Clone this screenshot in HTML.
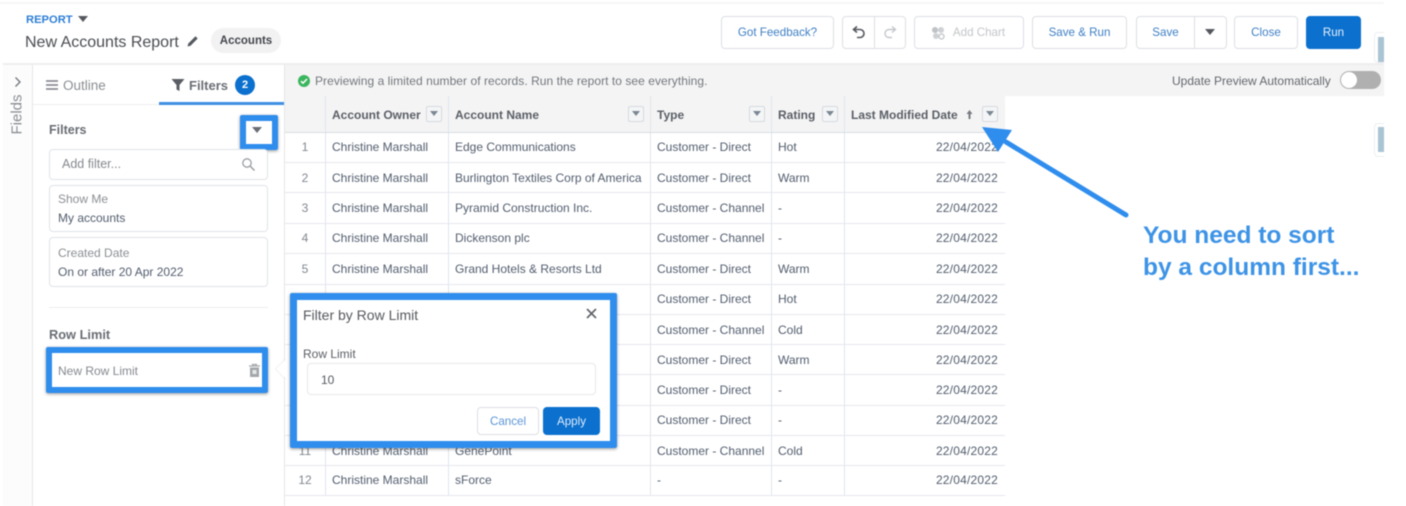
<!DOCTYPE html>
<html>
<head>
<meta charset="utf-8">
<style>
html,body{margin:0;padding:0;background:#fff}
body{width:1406px;height:506px;overflow:hidden;position:relative;font-family:"Liberation Sans",sans-serif;color:#4c5563;font-size:12px}
#w{position:absolute;left:0;top:0;width:1406px;height:506px;filter:blur(.6px);overflow:hidden}
.a{position:absolute;white-space:nowrap}
.b{position:absolute;box-sizing:border-box;background:#fff;border:1px solid #dfe3e8;border-radius:4px}
.btn{position:absolute;box-sizing:border-box;background:#fff;border:1px solid #dcdfe4;border-radius:4px;height:33px;top:16px;text-align:center;line-height:31px;color:#3f7fc4;font-size:11.6px}
.hl{position:absolute;box-sizing:border-box;border:6px solid #2f8ded;border-radius:2px;box-shadow:0 1px 3px rgba(0,0,0,.4)}
.hr{position:absolute;left:285px;width:720px;height:1px;background:#e4e8ee}
.vr{position:absolute;top:96px;height:400px;width:1px;background:#dfe4ec}
.th{position:absolute;top:108px;font-weight:bold;color:#5a5f66;font-size:12px;white-space:nowrap}
.dd{position:absolute;top:106px;width:16px;height:16px;box-sizing:border-box;border:1px solid #d5dae0;border-radius:2px;background:#f4f5f6}
.dd:after{content:"";position:absolute;left:3px;top:4px;border:4px solid transparent;border-top:5px solid #7b8794;border-bottom:0}
.n{position:absolute;width:40px;left:285px;text-align:center;color:#80868e}
.c1,.c2,.c3,.c4,.c5{position:absolute;white-space:nowrap;color:#525d6e}
.c1{left:332px}.c2{left:455px}.c3{left:657px}.c4{left:778px}.c5{right:408px;letter-spacing:.2px}
</style>
</head>
<body>
<div id="w">
<div class="a" style="left:0;top:2px;width:1384px;height:2px;background:#f6f6f6"></div>

<!-- Header -->
<div class="a" style="left:26px;top:14px;color:#2e7fd6;font-weight:bold;font-size:11.2px">REPORT</div>
<div class="a" style="left:78px;top:16px;width:0;height:0;border:5px solid transparent;border-top:6px solid #55595f;border-bottom:0"></div>
<div class="a" style="left:25px;top:34px;font-size:16px;color:#4a4d52">New Accounts Report</div>
<svg class="a" style="left:186px;top:34px" width="14" height="14" viewBox="0 0 14 14"><path d="M1.500 12.500l.8-3L9.500 2.300l2.200 2.200-7.200 7.200z" fill="#55595f"/></svg>
<div class="a" style="left:211px;top:28px;width:70px;height:25px;border-radius:13px;background:#f2f2f2;text-align:center;line-height:27px;font-weight:bold;font-size:11.500px;color:#43474d">Accounts</div>

<div class="btn" style="left:721px;width:113px">Got Feedback?</div>
<div class="btn" style="left:842px;width:64px"></div>
<div class="a" style="left:874px;top:17px;width:1px;height:31px;background:#dcdfe4"></div>
<svg class="a" style="left:851px;top:24px" width="16" height="17" viewBox="0 0 16 17"><path d="M6 2.500L2.500 5.500 6 8.500M3 5.500h6a3.700 3.700 0 0 1 0 8H6" fill="none" stroke="#54585e" stroke-width="1.600"/></svg>
<svg class="a" style="left:882px;top:24px" width="16" height="17" viewBox="0 0 16 17"><path d="M10 2.500l3.500 3-3.500 3M13 5.500H7a3.700 3.700 0 0 0 0 8h3" fill="none" stroke="#c4c7cb" stroke-width="1.400"/></svg>
<div class="btn" style="left:914px;width:110px;color:#c3c5c8;padding-left:20px">Add Chart</div>
<svg class="a" style="left:930px;top:25px" width="16" height="16" viewBox="0 0 16 16"><circle cx="5" cy="5" r="3" fill="#bfc2c6"/><circle cx="11" cy="5" r="3" fill="#cfd2d5"/><circle cx="6" cy="11" r="3" fill="#cfd2d5"/><circle cx="11.500" cy="11.500" r="2.500" fill="none" stroke="#bfc2c6" stroke-width="1.200"/></svg>
<div class="btn" style="left:1032px;width:95px">Save &amp; Run</div>
<div class="btn" style="left:1136px;width:59px;border-radius:4px 0 0 4px">Save</div>
<div class="btn" style="left:1194px;width:33px;border-radius:0 4px 4px 0"></div>
<div class="a" style="left:1205px;top:29px;width:0;height:0;border:5px solid transparent;border-top:6px solid #54585e;border-bottom:0"></div>
<div class="btn" style="left:1234px;width:64px">Close</div>
<div class="btn" style="left:1306px;width:55px;background:#0b70ce;border-color:#0b70ce;color:#e7f1fb">Run</div>

<!-- Right edge thumbnails -->
<div class="b" style="left:1374px;top:32px;width:16px;height:31px;border-color:#eceef0"></div>
<div class="a" style="left:1378px;top:37px;width:6px;height:25px;background:#a9c4d2"></div>
<div class="b" style="left:1374px;top:123px;width:16px;height:34px;border-color:#eceef0"></div>
<div class="a" style="left:1378px;top:127px;width:6px;height:25px;background:#a9c4d2"></div>
<div class="a" style="left:1384px;top:0;width:22px;height:506px;background:#fff"></div>

<!-- Body frame -->
<div class="a" style="left:3px;top:63px;width:1381px;height:2px;background:#eeeeee"></div>
<div class="a" style="left:32px;top:65px;width:1px;height:441px;background:#e6e6e6"></div>
<div class="a" style="left:284px;top:65px;width:1px;height:441px;background:#e6e6e6"></div>
<div class="a" style="left:3px;top:65px;width:29px;height:441px;background:#fcfcfc"></div>

<!-- Fields rail -->
<svg class="a" style="left:13px;top:76px" width="10" height="12" viewBox="0 0 10 12"><path d="M2.500 1.500L7 6l-4.500 4.500" fill="none" stroke="#70757b" stroke-width="1.300"/></svg>
<div class="a" style="left:-3px;top:106px;width:40px;text-align:center;transform:rotate(-90deg);font-size:15px;color:#8b8f94">Fields</div>

<!-- Tabs -->
<svg class="a" style="left:45px;top:79px" width="14" height="12" viewBox="0 0 14 12"><path d="M1 2h12M1 6h12M1 10h12" stroke="#7b7f85" stroke-width="1.500"/></svg>
<div class="a" style="left:63px;top:78px;font-size:13.500px;color:#8a8e93">Outline</div>
<svg class="a" style="left:171px;top:78px" width="14" height="14" viewBox="0 0 14 14"><path d="M.5 1h13L8.500 7v6l-3-1.500V7z" fill="#5a5e64"/></svg>
<div class="a" style="left:189px;top:78px;font-size:13px;font-weight:bold;color:#6a6e74">Filters</div>
<div class="a" style="left:235px;top:75px;width:20px;height:20px;border-radius:50%;background:#0b70ce;color:#fff;text-align:center;line-height:20px;font-size:11px;font-weight:bold">2</div>
<div class="a" style="left:33px;top:104px;width:251px;height:1px;background:#eeeeee"></div>
<div class="a" style="left:159px;top:102px;width:125px;height:3px;background:#3f8fe3"></div>

<!-- Filters panel -->
<div class="a" style="left:49px;top:123px;font-weight:bold;font-size:12.500px;color:#696d73">Filters</div>
<div class="a" style="left:245px;top:120px;width:28px;height:25px;background:#fff"></div>
<div class="a" style="left:252px;top:127px;width:0;height:0;border:5px solid transparent;border-top:6px solid #6a6e74;border-bottom:0"></div>
<div class="hl" style="left:240px;top:115px;width:38px;height:35px"></div>

<div class="b" style="left:49px;top:149px;width:219px;height:31px"></div>
<div class="a" style="left:62px;top:157px;font-size:12.500px;color:#85898f">Add filter...</div>
<svg class="a" style="left:241px;top:157px" width="15" height="15" viewBox="0 0 15 15"><circle cx="6" cy="6" r="4.200" fill="none" stroke="#9a9ea3" stroke-width="1.300"/><path d="M9 9l4.500 4.500" stroke="#9a9ea3" stroke-width="1.500"/></svg>

<div class="b" style="left:49px;top:185px;width:219px;height:47px"></div>
<div class="a" style="left:58px;top:192px;color:#8b8f94">Show Me</div>
<div class="a" style="left:58px;top:211px;color:#525d6e">My accounts</div>
<div class="b" style="left:49px;top:237px;width:219px;height:50px"></div>
<div class="a" style="left:58px;top:246px;color:#8b8f94">Created Date</div>
<div class="a" style="left:58px;top:265px;color:#525d6e">On or after 20 Apr 2022</div>
<div class="a" style="left:49px;top:307px;width:219px;height:1px;background:#ececec"></div>

<div class="a" style="left:49px;top:327px;font-weight:bold;font-size:12.800px;color:#696d73">Row Limit</div>
<div class="hl" style="left:46px;top:347px;width:222px;height:46px"></div>
<div class="a" style="left:58px;top:364px;color:#85898f">New Row Limit</div>
<svg class="a" style="left:248px;top:363px" width="13" height="15" viewBox="0 0 13 15"><path d="M1 3h11M4.500 3V1.500h4V3" stroke="#a4a7aa" stroke-width="1.200" fill="none"/><path d="M2 4.500h9V14H2z" fill="#a4a7aa"/><path d="M4.500 7h4v4h-4z" fill="#e6e6e6"/></svg>

<!-- Preview bar -->
<div class="a" style="left:285px;top:65px;width:1099px;height:31px;background:#f4f4f4"></div>
<div class="a" style="left:298px;top:75px;width:12px;height:12px;border-radius:50%;background:#3bb55e"></div>
<svg class="a" style="left:298px;top:75px" width="12" height="12" viewBox="0 0 12 12"><path d="M3 6.200l2 2 4-4.200" fill="none" stroke="#fff" stroke-width="1.500"/></svg>
<div class="a" style="left:315px;top:74px;color:#73777d;letter-spacing:.05px">Previewing a limited number of records. Run the report to see everything.</div>
<div class="a" style="left:1172px;top:74px;color:#63676d">Update Preview Automatically</div>
<div class="a" style="left:1340px;top:71px;width:41px;height:18px;border-radius:9px;background:#b0b0b0"></div>
<div class="a" style="left:1341px;top:72px;width:16px;height:16px;border-radius:50%;background:#fff"></div>

<!-- Table header -->
<div class="a" style="left:285px;top:96px;width:720px;height:36px;background:#f4f4f4"></div>
<div class="th" style="left:332px">Account Owner</div><div class="dd" style="left:426px"></div>
<div class="th" style="left:455px">Account Name</div><div class="dd" style="left:628px"></div>
<div class="th" style="left:657px">Type</div><div class="dd" style="left:749px"></div>
<div class="th" style="left:778px">Rating</div><div class="dd" style="left:822px"></div>
<div class="th" style="left:851px">Last Modified Date</div>
<svg class="a" style="left:965px;top:109px" width="9" height="12" viewBox="0 0 9 12"><path d="M4.500 1L1.500 5h2v5h2V5h2z" fill="#777b81"/></svg>
<div class="dd" style="left:982px"></div>

<!-- Grid -->
<div class="vr" style="left:325px"></div>
<div class="vr" style="left:448px"></div>
<div class="vr" style="left:650px"></div>
<div class="vr" style="left:771px"></div>
<div class="vr" style="left:844px"></div>
<div class="hr" style="top:132px;background:#d8dde4"></div>
<div class="hr" style="top:162px"></div>
<div class="hr" style="top:192px"></div>
<div class="hr" style="top:223px"></div>
<div class="hr" style="top:253px"></div>
<div class="hr" style="top:284px"></div>
<div class="hr" style="top:314px"></div>
<div class="hr" style="top:344px"></div>
<div class="hr" style="top:374px"></div>
<div class="hr" style="top:405px"></div>
<div class="hr" style="top:435px"></div>
<div class="hr" style="top:465px"></div>
<div class="hr" style="top:495px"></div>

<!-- Rows -->
<div class="n" style="top:140px">1</div><div class="c1" style="top:140px">Christine Marshall</div><div class="c2" style="top:140px">Edge Communications</div><div class="c3" style="top:140px">Customer - Direct</div><div class="c4" style="top:140px">Hot</div><div class="c5" style="top:140px">22/04/2022</div>
<div class="n" style="top:171px">2</div><div class="c1" style="top:171px">Christine Marshall</div><div class="c2" style="top:171px">Burlington Textiles Corp of America</div><div class="c3" style="top:171px">Customer - Direct</div><div class="c4" style="top:171px">Warm</div><div class="c5" style="top:171px">22/04/2022</div>
<div class="n" style="top:201px">3</div><div class="c1" style="top:201px">Christine Marshall</div><div class="c2" style="top:201px">Pyramid Construction Inc.</div><div class="c3" style="top:201px">Customer - Channel</div><div class="c4" style="top:201px">-</div><div class="c5" style="top:201px">22/04/2022</div>
<div class="n" style="top:231px">4</div><div class="c1" style="top:231px">Christine Marshall</div><div class="c2" style="top:231px">Dickenson plc</div><div class="c3" style="top:231px">Customer - Channel</div><div class="c4" style="top:231px">-</div><div class="c5" style="top:231px">22/04/2022</div>
<div class="n" style="top:262px">5</div><div class="c1" style="top:262px">Christine Marshall</div><div class="c2" style="top:262px">Grand Hotels &amp; Resorts Ltd</div><div class="c3" style="top:262px">Customer - Direct</div><div class="c4" style="top:262px">Warm</div><div class="c5" style="top:262px">22/04/2022</div>
<div class="c3" style="top:292px">Customer - Direct</div><div class="c4" style="top:292px">Hot</div><div class="c5" style="top:292px">22/04/2022</div>
<div class="c3" style="top:323px">Customer - Channel</div><div class="c4" style="top:323px">Cold</div><div class="c5" style="top:323px">22/04/2022</div>
<div class="c3" style="top:353px">Customer - Direct</div><div class="c4" style="top:353px">Warm</div><div class="c5" style="top:353px">22/04/2022</div>
<div class="c3" style="top:383px">Customer - Direct</div><div class="c4" style="top:383px">-</div><div class="c5" style="top:383px">22/04/2022</div>
<div class="c3" style="top:413px">Customer - Direct</div><div class="c4" style="top:413px">-</div><div class="c5" style="top:413px">22/04/2022</div>
<div class="n" style="top:444px">11</div><div class="c1" style="top:444px">Christine Marshall</div><div class="c2" style="top:444px">GenePoint</div><div class="c3" style="top:444px">Customer - Channel</div><div class="c4" style="top:444px">Cold</div><div class="c5" style="top:444px">22/04/2022</div>
<div class="n" style="top:473px">12</div><div class="c1" style="top:473px">Christine Marshall</div><div class="c2" style="top:473px">sForce</div><div class="c3" style="top:473px">-</div><div class="c4" style="top:473px">-</div><div class="c5" style="top:473px">22/04/2022</div>

<!-- Popover -->
<div class="a" style="left:279px;top:362px;width:14px;height:14px;background:#fff;transform:rotate(45deg);box-shadow:-1px 1px 1px rgba(0,0,0,.06)"></div>
<div class="a" style="left:290px;top:293px;width:327px;height:155px;background:#fff"></div>
<div class="hl" style="left:290px;top:293px;width:327px;height:155px;border-width:7px"></div>
<div class="a" style="left:303px;top:307px;font-size:14px;color:#56595e">Filter by Row Limit</div>
<svg class="a" style="left:585px;top:307px" width="13" height="13" viewBox="0 0 13 13"><path d="M2 2l9 9M11 2l-9 9" stroke="#5f6368" stroke-width="1.600"/></svg>
<div class="a" style="left:303px;top:347px;color:#5c6066">Row Limit</div>
<div class="b" style="left:307px;top:363px;width:289px;height:32px;border-color:#e6e8eb"></div>
<div class="a" style="left:321px;top:373px;color:#55595f">10</div>
<div class="btn" style="left:477px;top:407px;width:62px;height:28px;line-height:27px;color:#5b95d6">Cancel</div>
<div class="btn" style="left:543px;top:407px;width:57px;height:28px;line-height:27px;background:#0b70ce;border-color:#0b70ce;color:#dfecf9">Apply</div>

<!-- Arrow -->
<svg class="a" style="left:970px;top:115px" width="170" height="110" viewBox="0 0 170 110"><path d="M156 100L36 27" stroke="#2f8ded" stroke-width="5" stroke-linecap="round"/><path d="M12 12L42 15L28 37z" fill="#2f8ded"/></svg>

<div class="a" style="left:1143px;top:220px;font-size:24.500px;font-weight:bold;color:#3d93e6;line-height:32px;white-space:nowrap">You need to sort<br>by a column first...</div>
</div>
</body>
</html>
